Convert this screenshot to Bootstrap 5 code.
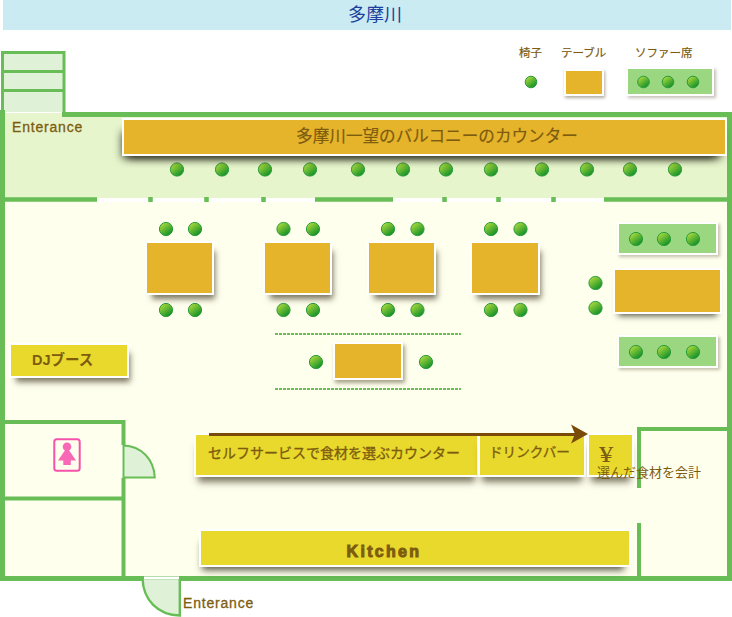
<!DOCTYPE html>
<html lang="ja">
<head>
    <meta charset="UTF-8">
    <meta name="viewport" content="width=device-width, initial-scale=1.0">
    <link href="https://cdn.jsdelivr.net/npm/bootstrap@5.3.3/dist/css/bootstrap.min.css" rel="stylesheet">
    <script src="https://cdn.jsdelivr.net/npm/bootstrap@5.3.3/dist/js/bootstrap.bundle.min.js"></script>
    <title>多摩川</title>
    <style>
        body{
            background: #fff;
            overflow: hidden;
            font-family: "Liberation Sans", "Noto Sans CJK JP", sans-serif;
            color: #7d5c10;
        }
        .river{
            height: 30px;
            margin-left: 3px;
            margin-right: 1px;
            background: #cbebf3;
            color: #1c3f9e;
            font-size: 18px;
            line-height: 30px;
            padding-left: 16px;
        }
        .plan{
            width: 732px;
            height: 587px;
        }
        .plan-bg{
            left: 0;
            top: -30px;
        }
        /* items on the floor plan, coordinates are the page ones minus the 30px river */
        .item{
            position: absolute;
            border: 2px solid #fff;
            box-shadow: 4px 7px 6px -3px rgba(50, 45, 20, .65);
        }
        .gold{ background: #e6b42b; }
        .lime{ background: #e8d92c; }
        .sofa{ background: #9bd680; box-shadow: 2px 2px 3px rgba(60, 50, 20, .3); }

        .t-counter{ left: 122px; top: 88px; width: 605px; height: 38px; font-size: 16.6px; padding-left: 25px; box-shadow: -6px 8px 8px -6px rgba(30, 30, 15, .8), 0 8px 8px -6px rgba(30, 30, 15, .8); -webkit-text-stroke: .2px #7d5c10; }
        .t-1{ left: 145px; top: 211px; width: 69px; height: 54px; }
        .t-2{ left: 263px; top: 211px; width: 69px; height: 54px; }
        .t-3{ left: 367px; top: 211px; width: 69px; height: 54px; }
        .t-4{ left: 470px; top: 211px; width: 70px; height: 54px; }
        .t-5{ left: 613px; top: 238px; width: 109px; height: 46px; box-shadow: 0 7px 6px -5px rgba(40, 40, 20, .75); }
        .t-6{ left: 333px; top: 312px; width: 70px; height: 38px; box-shadow: 2px 3px 4px rgba(60, 50, 20, .45); }
        .t-legend{ left: 564px; top: 39px; width: 40px; height: 27px; box-shadow: 1px 2px 3px rgba(60, 50, 20, .4); }
        .s-legend{ left: 626px; top: 37px; width: 88px; height: 29px; }
        .s-1{ left: 617px; top: 192px; width: 101px; height: 33px; }
        .s-2{ left: 617px; top: 305px; width: 101px; height: 33px; }

        .c-dj{ left: 9px; top: 313px; width: 120px; height: 35px; font-size: 14.5px; font-weight: bold; padding-left: 21px; }
        .c-self{ left: 194px; top: 403px; width: 285px; height: 44px; font-size: 14px; padding-left: 12px; padding-bottom: 3px; -webkit-text-stroke: .3px #7d5c10; box-shadow: 0 9px 7px -4px rgba(50, 45, 20, .65); }
        .c-drink{ left: 478px; top: 403px; width: 108px; height: 44px; font-size: 13.6px; padding-left: 9px; padding-bottom: 3px; -webkit-text-stroke: .3px #7d5c10; box-shadow: 0 9px 7px -4px rgba(50, 45, 20, .65); }
        .c-reg{ left: 587px; top: 403px; width: 47px; height: 44px; box-shadow: 0 9px 7px -4px rgba(50, 45, 20, .65); }
        .c-kitchen{ left: 199px; top: 499px; width: 432px; height: 38px; font-size: 16px; font-weight: bold; letter-spacing: 2.300px; padding-right: 62px; padding-top: 7px; -webkit-text-stroke: 1px #7d5c10; box-shadow: -2px 8px 7px -5px rgba(30, 30, 15, .75); }

        .label{
            position: absolute;
            white-space: nowrap;
            line-height: 1;
        }
        .l-chair{ left: 519px; top: 18px; font-size: 11.5px; -webkit-text-stroke: .2px #7d5c10; }
        .l-table{ left: 561px; top: 18px; font-size: 11.5px; -webkit-text-stroke: .2px #7d5c10; }
        .l-sofa{ left: 635px; top: 18px; font-size: 11.5px; -webkit-text-stroke: .2px #7d5c10; }
        .l-en{ font-size: 14px; letter-spacing: .8px; -webkit-text-stroke: .3px #7d5c10; }
        .l-en1{ left: 12px; top: 90px; }
        .l-en2{ left: 183px; top: 566px; }
        .l-yen{ left: 599px; top: 413px; font-family: "Liberation Serif", serif; font-size: 23px; transform: scaleX(1.250); transform-origin: left top; }
        .l-pay{ left: 597px; top: 436px; font-size: 13px; }
    </style>
</head>
<body>
    <div class="river text-center">多摩川</div>
    <div class="plan position-relative">
        <svg class="plan-bg position-absolute" width="732" height="617" viewBox="0 0 732 617" xmlns="http://www.w3.org/2000/svg">
            <defs>
                <linearGradient id="ball" x1="0.2" y1="0.1" x2="0.8" y2="0.9">
                    <stop offset="0" stop-color="#a8d83c"/>
                    <stop offset="1" stop-color="#129028"/>
                </linearGradient>
                <circle id="seat" r="6.6" fill="url(#ball)" stroke="#2a9c3c" stroke-width="1"/>
                <circle id="seat-s" r="5.8" fill="url(#ball)" stroke="#2a9c3c" stroke-width="1"/>
            </defs>

            <!-- floors -->
            <rect x="3" y="113" width="726" height="87" fill="#e6f5cc"/>
            <rect x="3" y="200" width="726" height="379" fill="#ffffee"/>

            <!-- stairs -->
            <rect x="2" y="52" width="62" height="60" fill="#dff2d8"/>
            <path d="M2.500 110V52.500H64V113M2.500 71.500H64M2.500 90.500H64" fill="none" stroke="#68bd57" stroke-width="3"/>

            <!-- walls -->
            <g fill="none" stroke="#68bd57">
                <path stroke-width="5" d="M2.500 110V578.500H729.500V114.500H62"/>
                <path stroke-width="4.600" d="M5 199.500H97M315 199.500H393M604 199.500H727"/>
                <path stroke-width="4.500" d="M150.500 197v5M206.500 197v5M263.500 197v5M444.500 197v5M498.500 197v5M553.500 197v5"/>
                <path stroke-width="4" d="M3 422H123.500V445M123.500 478V577M3 498.500H125"/>
                <path stroke-width="4" d="M639 488V429H727M639 523V577"/>
            </g>
            <g fill="#fff">
                <rect x="97" y="198" width="51" height="4"/>
                <rect x="153" y="198" width="51" height="4"/>
                <rect x="209" y="198" width="52" height="4"/>
                <rect x="266" y="198" width="49" height="4"/>
                <rect x="393" y="198" width="49" height="4"/>
                <rect x="447" y="198" width="49" height="4"/>
                <rect x="501" y="198" width="50" height="4"/>
                <rect x="556" y="198" width="48" height="4"/>
            </g>

            <!-- doors -->
            <rect x="121.500" y="445" width="3.500" height="33" fill="#fff"/>
            <path d="M123.500 445.500C141 446 154 459 154.800 477.500H123.500Z" fill="#dff2d8" stroke="#68bd57" stroke-width="2"/>
            <path d="M142.500 578C143 600 158 615 179.800 615.500V578Z" fill="#dff2d8" stroke="#68bd57" stroke-width="2.400"/>
            <rect x="144" y="576.500" width="35" height="2.500" fill="#fff"/>

            <!-- dashed lines round the middle table -->
            <path d="M275 334H461M275 389H461" stroke="#68bd57" stroke-width="2" stroke-dasharray="3 1"/>

            <!-- toilet -->
            <rect x="54.300" y="439.300" width="25.400" height="31.400" rx="2.500" fill="none" stroke="#f552ac" stroke-width="2"/>
            <circle cx="67" cy="446.700" r="4.300" fill="#f868b6"/>
            <path d="M65.500 449.500H68.500L76 460.500H70.800V465H63.300V460.500H58Z" fill="#f868b6"/>

            <!-- seats in the balcony -->
            <use href="#seat" x="177" y="169.500"/><use href="#seat" x="222" y="169.500"/>
            <use href="#seat" x="265" y="169.500"/><use href="#seat" x="310" y="169.500"/>
            <use href="#seat" x="358" y="169.500"/><use href="#seat" x="403" y="169.500"/>
            <use href="#seat" x="446" y="169.500"/><use href="#seat" x="491" y="169.500"/>
            <use href="#seat" x="542" y="169.500"/><use href="#seat" x="587" y="169.500"/>
            <use href="#seat" x="630" y="169.500"/><use href="#seat" x="675" y="169.500"/>

            <!-- seats round the tables -->
            <use href="#seat" x="166" y="229"/><use href="#seat" x="195" y="229"/>
            <use href="#seat" x="283.500" y="229"/><use href="#seat" x="313" y="229"/>
            <use href="#seat" x="388" y="229"/><use href="#seat" x="417.500" y="229"/>
            <use href="#seat" x="491" y="229"/><use href="#seat" x="520.500" y="229"/>
            <use href="#seat" x="166" y="310"/><use href="#seat" x="195" y="310"/>
            <use href="#seat" x="283.500" y="310"/><use href="#seat" x="313" y="310"/>
            <use href="#seat" x="388" y="310"/><use href="#seat" x="417.500" y="310"/>
            <use href="#seat" x="491" y="310"/><use href="#seat" x="520.500" y="310"/>
            <use href="#seat" x="595.500" y="283"/><use href="#seat" x="595.500" y="308"/>
            <use href="#seat" x="316" y="362"/><use href="#seat" x="426" y="362"/>
        </svg>

        <div class="label l-chair">椅子</div>
        <div class="label l-table">テーブル</div>
        <div class="label l-sofa">ソファー席</div>
        <div class="item gold t-legend"></div>
        <div class="item sofa s-legend"></div>

        <div class="item gold t-counter d-flex align-items-center justify-content-center">多摩川一望のバルコニーのカウンター</div>
        <div class="label l-en l-en1">Enterance</div>

        <div class="item gold t-1"></div>
        <div class="item gold t-2"></div>
        <div class="item gold t-3"></div>
        <div class="item gold t-4"></div>
        <div class="item gold t-5"></div>
        <div class="item gold t-6"></div>
        <div class="item sofa s-1"></div>
        <div class="item sofa s-2"></div>

        <div class="item lime c-dj d-flex align-items-center">DJブース</div>
        <div class="item lime c-self d-flex align-items-center">セルフサービスで食材を選ぶカウンター</div>
        <div class="item lime c-drink d-flex align-items-center">ドリンクバー</div>
        <div class="item lime c-reg"></div>
        <div class="item lime c-kitchen d-flex align-items-center justify-content-center">Kitchen</div>

        <div class="label l-yen">¥</div>
        <div class="label l-pay">選んだ食材を会計</div>
        <div class="label l-en l-en2">Enterance</div>

        <!-- seats on the sofas and the flow arrow sit over the boxes -->
        <svg class="plan-bg position-absolute" width="732" height="617" viewBox="0 0 732 617" xmlns="http://www.w3.org/2000/svg">
            <use href="#seat-s" x="531" y="82"/>
            <use href="#seat-s" x="643.500" y="82"/><use href="#seat-s" x="668" y="82"/><use href="#seat-s" x="693" y="82"/>
            <use href="#seat" x="636" y="239"/><use href="#seat" x="664" y="239"/><use href="#seat" x="693" y="239"/>
            <use href="#seat" x="636" y="352"/><use href="#seat" x="664" y="352"/><use href="#seat" x="693" y="352"/>
            <rect x="209" y="433" width="366" height="3" fill="#7a4a08"/>
            <path d="M571 424.500L588 434L571 443.500L575 434Z" fill="#7a4a08"/>
        </svg>
    </div>
</body>
</html>
